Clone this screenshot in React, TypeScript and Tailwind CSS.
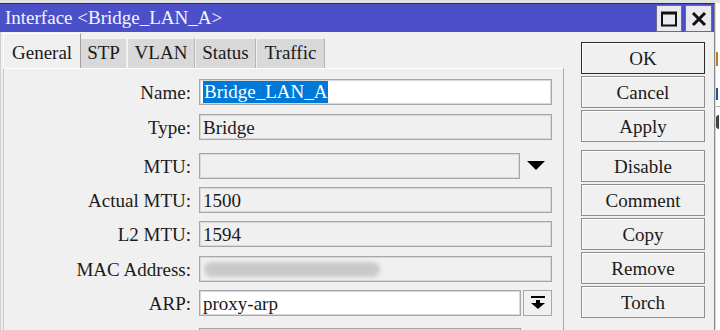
import React from "react";

const field =
  "h-[26px] border border-[#a6a6a6] shadow-[inset_0_0_0_1px_#d9d9d9] flex items-center pl-[3px] text-[19px] text-[#1a1a1a] leading-none overflow-hidden whitespace-nowrap";

function Row({
  label,
  mt,
  children,
}: {
  label: string;
  mt: string;
  children: React.ReactNode;
}) {
  return (
    <div className={`flex items-center h-[26px] ${mt}`}>
      <div className="w-[187px] text-right text-[19px] text-[#1a1a1a] leading-none whitespace-nowrap">
        {label}
      </div>
      <div className="ml-[8px] flex items-center">{children}</div>
    </div>
  );
}

function Btn({ label, def, mt }: { label: string; def?: boolean; mt?: string }) {
  return (
    <div
      className={`h-[32px] w-[124px] flex items-center justify-center bg-[#f0f0f0] text-[19px] text-[#1a1a1a] leading-none border ${
        def ? "border-[#2b2b2b]" : "border-[#8e8e8e]"
      } shadow-[inset_1px_1px_0_#ffffff] ${mt ?? ""}`}
    >
      {label}
    </div>
  );
}

export default function App() {
  return (
    <div className="w-[720px] h-[330px] overflow-hidden bg-white flex flex-col font-['Liberation_Serif','Times_New_Roman',serif]">
      <div className="h-[3px] shrink-0 bg-[#e2e2e2]" />
      <div className="flex flex-1 min-h-0">
        {/* window */}
        <div className="w-[715px] shrink-0 flex flex-col bg-[#f0f0f0] border-t border-[#303030] border-r border-r-[#8a8a8a]">
          {/* title bar */}
          <div className="h-[28px] shrink-0 bg-[#4b50c9] flex items-start">
            <div className="flex-1 pl-[5px] pt-[3px] text-[19px] leading-[22px] text-[#f4f4ff] whitespace-nowrap">
              Interface &lt;Bridge_LAN_A&gt;
            </div>
            <div className="flex gap-[3px] pt-[1px] pr-[2px]">
              <div className="w-[26px] h-[27px] bg-[#e9e9ee] border border-[#6a6a8a] flex items-center justify-center">
                <svg width="16" height="16" viewBox="0 0 16 16">
                  <rect x="1" y="1.5" width="14" height="13" fill="none" stroke="#111" strokeWidth="2" />
                  <rect x="1" y="1" width="14" height="2.5" fill="#111" />
                </svg>
              </div>
              <div className="w-[27px] h-[27px] bg-[#e9e9ee] border border-[#6a6a8a] flex items-center justify-center">
                <svg width="16" height="16" viewBox="0 0 16 16">
                  <path d="M2 2 L14 14 M14 2 L2 14" stroke="#111" strokeWidth="3" />
                </svg>
              </div>
            </div>
          </div>

          {/* body */}
          <div className="flex flex-1 min-h-0 pl-[2px] border-l border-[#d0d0d0]">
            {/* left: tabs + panel */}
            <div className="w-[561px] shrink-0 flex flex-col">
              <div className="h-[36px] shrink-0 flex items-end pl-[0px]">
                <div className="h-[35px] w-[78px] flex items-end bg-[#f0f0f0] border-t border-l border-white border-r border-r-[#a0a0a0] pl-[8px] text-[19px] text-[#1a1a1a] leading-[30px]">
                  General
                </div>
                <div className="h-[30px] w-[46px] flex items-end justify-center bg-[#d9d9d9] border-t border-r border-[#f2f2f2] text-[19px] text-[#1a1a1a] leading-[30px]">
                  STP
                </div>
                <div className="h-[30px] w-[68px] flex items-end justify-center bg-[#d9d9d9] border-t border-l border-r border-[#f2f2f2] border-r-[#b5b5b5] text-[19px] text-[#1a1a1a] leading-[30px]">
                  VLAN
                </div>
                <div className="h-[30px] w-[61px] flex items-end justify-center bg-[#d9d9d9] border-t border-l border-r border-[#f2f2f2] border-r-[#b5b5b5] text-[19px] text-[#1a1a1a] leading-[30px]">
                  Status
                </div>
                <div className="h-[30px] w-[69px] flex items-end justify-center bg-[#d9d9d9] border-t border-l border-r border-[#f2f2f2] border-r-[#b5b5b5] text-[19px] text-[#1a1a1a] leading-[30px]">
                  Traffic
                </div>
              </div>
              <div className="flex-1 min-h-0 border-t border-white border-l border-l-[#c8c8c8] border-r border-r-[#a8a8a8] pt-[10px] flex flex-col">
                <Row label="Name:" mt="mt-0">
                  <div className={`${field} w-[353px] bg-white`}>
                    <span className="bg-[#0078d7] text-white px-[1px] leading-[22px]">Bridge_LAN_A</span>
                  </div>
                </Row>
                <Row label="Type:" mt="mt-[9px]">
                  <div className={`${field} w-[353px] bg-[#f0f0f0]`}>Bridge</div>
                </Row>
                <Row label="MTU:" mt="mt-[13px]">
                  <div className={`${field} w-[321px] bg-[#f0f0f0]`} />
                  <div className="w-[32px] flex items-center justify-center">
                    <svg width="18" height="10" viewBox="0 0 18 10">
                      <path d="M0 0 H18 L9 9 Z" fill="#000" />
                    </svg>
                  </div>
                </Row>
                <Row label="Actual MTU:" mt="mt-[8px]">
                  <div className={`${field} w-[353px] bg-[#f0f0f0]`}>1500</div>
                </Row>
                <Row label="L2 MTU:" mt="mt-[8px]">
                  <div className={`${field} w-[353px] bg-[#f0f0f0]`}>1594</div>
                </Row>
                <Row label="MAC Address:" mt="mt-[9px]">
                  <div className={`${field} w-[353px] bg-[#f0f0f0]`}>
                    <div className="w-[176px] h-[15px] rounded-full bg-[#c9c9c9] blur-[2px] ml-[1px]" />
                  </div>
                </Row>
                <Row label="ARP:" mt="mt-[8px]">
                  <div className={`${field} w-[322px] bg-white`}>proxy-arp</div>
                  <div className="ml-[2px] w-[29px] h-[26px] border border-[#a6a6a6] bg-[#f0f0f0] flex items-center justify-center">
                    <svg width="16" height="16" viewBox="0 0 16 16">
                      <rect x="1" y="1" width="14" height="2" fill="#000" />
                      <rect x="6" y="5" width="4" height="4" fill="#000" />
                      <path d="M1 8 H15 L8 14 Z" fill="#000" />
                    </svg>
                  </div>
                </Row>
                <Row label="" mt="mt-[12px]">
                  <div className={`${field} w-[322px] bg-[#f0f0f0]`} />
                </Row>
              </div>
            </div>

            {/* right: buttons */}
            <div className="ml-[17px] pt-[10px] flex flex-col gap-[2px]">
              <Btn label="OK" def />
              <Btn label="Cancel" />
              <Btn label="Apply" />
              <Btn label="Disable" mt="mt-[6px]" />
              <Btn label="Comment" />
              <Btn label="Copy" />
              <Btn label="Remove" />
              <Btn label="Torch" />
            </div>
          </div>
        </div>

        {/* background window sliver */}
        <div className="flex-1 flex flex-col bg-white border-l border-[#d8d8d8]">
          <div className="h-[49px]" />
          <div className="w-[2px] h-[14px] bg-[#c47a2a]" />
          <div className="h-[22px]" />
          <div className="w-[2px] h-[12px] bg-[#2050a0]" />
          <div className="h-[6px]" />
          <div className="h-[1px] bg-[#b0b0b0]" />
          <div className="h-[8px]" />
          <div className="w-[3px] h-[14px] bg-[#404040] rounded-l-full" />
        </div>
      </div>
    </div>
  );
}
